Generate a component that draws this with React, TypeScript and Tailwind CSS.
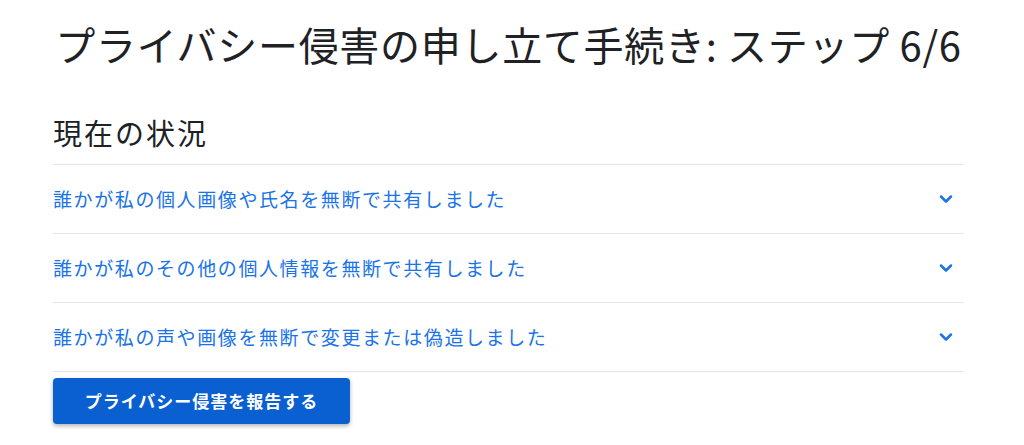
import { ChevronDown } from 'lucide-react';

const items = [
  '誰かが私の個人画像や氏名を無断で共有しました',
  '誰かが私のその他の個人情報を無断で共有しました',
  '誰かが私の声や画像を無断で変更または偽造しました',
];

export default function App() {
  return (
    <div
      className="w-[1024px] h-[445px] bg-white text-[#202124] overflow-hidden"
      style={{ fontFamily: '"Noto Sans CJK JP", "Noto Sans", sans-serif' }}
    >
      <div className="mx-[53px] w-[911px] flex flex-col">
        {/* Title */}
        <h1 className="pt-[18px] text-[40px] leading-[52px] text-center font-normal tracking-[0.7px] whitespace-nowrap">
          プライバシー侵害の申し立て手続き: ステップ 6/6
        </h1>

        {/* Current state */}
        <h2 className="mt-[42px] text-[29px] leading-[40px] font-normal tracking-[2px]">現在の状況</h2>

        <div className="mt-[12px] border-t border-[#e6e6e6]">
          {items.map((label) => (
            <div
              key={label}
              className="flex items-center justify-between h-[69px] border-b border-[#e6e6e6] pr-[8px]"
            >
              <span className="text-[19px] tracking-[1.6px] text-[#1a73e8]">{label}</span>
              <ChevronDown className="w-5 h-5 text-[#1a73e8]" strokeWidth={3} />
            </div>
          ))}
        </div>

        {/* Action */}
        <div className="mt-[6px]">
          <button className="h-[46px] w-[297px] rounded-[4px] bg-[#0a5fd1] text-white text-[17px] font-semibold tracking-[1px] shadow-[0_2px_4px_rgba(0,0,0,0.3)]">
            プライバシー侵害を報告する
          </button>
        </div>
      </div>
    </div>
  );
}
